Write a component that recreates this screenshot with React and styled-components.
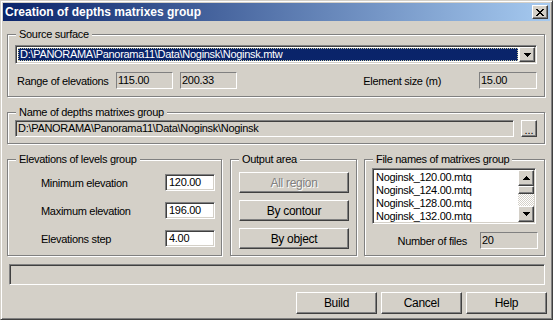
import React from "react";
import styled, { createGlobalStyle, css } from "styled-components";

const GlobalStyle = createGlobalStyle`
  html, body {
    margin: 0;
    padding: 0;
  }
  body {
    background: #d4d0c8;
    font-family: "Liberation Sans", Arial, sans-serif;
    font-size: 11px;
    letter-spacing: -0.3px;
    color: #000;
  }
`;

// win2000 bevels
const raised = css`
  border: 1px solid;
  border-color: #fff #404040 #404040 #fff;
  box-shadow: inset -1px -1px #808080, inset 1px 1px #d4d0c8;
`;

const sunken = css`
  border: 1px solid;
  border-color: #808080 #fff #fff #808080;
  box-shadow: inset 1px 1px #404040, inset -1px -1px #d4d0c8;
`;

const Window = styled.div`
  box-sizing: border-box;
  width: 553px;
  height: 320px;
  background: #d4d0c8;
  border: 1px solid;
  border-color: #d4d0c8 #404040 #404040 #d4d0c8;
  box-shadow: inset 1px 1px #fff, inset -1px -1px #808080;
  padding: 2px;
  display: flex;
  flex-direction: column;
`;

const TitleBar = styled.div`
  height: 18px;
  display: flex;
  align-items: center;
  justify-content: space-between;
  padding: 0 2px 0 2px;
  background: linear-gradient(to right, #0a246a, #a6caf0);
`;

const Title = styled.span`
  color: #fff;
  font-weight: bold;
  font-size: 12px;
  letter-spacing: 0;
`;

const CloseButton = styled.div`
  box-sizing: border-box;
  width: 16px;
  height: 14px;
  background: #d4d0c8;
  ${raised};
  display: flex;
  align-items: center;
  justify-content: center;
  padding-right: 1px;
`;

const Content = styled.div`
  flex: 1;
  display: flex;
  flex-direction: column;
  padding: 13px 5px 0 4px;
`;

const Group = styled.div`
  border: 1px solid #808080;
  box-shadow: inset 1px 1px #fff, 1px 1px #fff;
  margin-top: ${(p) => p.$gap || 0}px;
`;

const Caption = styled.div`
  width: fit-content;
  margin: -7px 0 0 8px;
  padding: 0 3px;
  line-height: 13px;
  background: #d4d0c8;
`;

const GroupBody = styled.div`
  padding: ${(p) => p.$pad};
  display: flex;
  flex-direction: column;
  gap: ${(p) => p.$gap || 0}px;
`;

const Combo = styled.div`
  box-sizing: border-box;
  height: 19px;
  background: #fff;
  ${sunken};
  padding: 1px;
  display: flex;
`;

const Selection = styled.div`
  flex: 1;
  margin: 1px 1px 1px 1px;
  background: #0a246a;
  color: #fff;
  outline: 1px dotted #c8c8a0;
  outline-offset: -1px;
  padding-left: 2px;
  line-height: 13px;
  white-space: nowrap;
  overflow: hidden;
`;

const ArrowButton = styled.div`
  box-sizing: border-box;
  width: ${(p) => p.$w || 16}px;
  height: ${(p) => p.$h ? `${p.$h}px` : "auto"};
  background: #d4d0c8;
  ${raised};
  display: flex;
  align-items: center;
  justify-content: center;
`;

const FieldRow = styled.div`
  display: flex;
  align-items: center;
  height: ${(p) => p.$h || 17}px;
  gap: ${(p) => p.$gap || 0}px;
  justify-content: ${(p) => p.$justify || "flex-start"};
`;

const Label = styled.span`
  white-space: nowrap;
  width: ${(p) => (p.$w ? `${p.$w}px` : "auto")};
  padding-left: ${(p) => p.$indent || 0}px;
  margin-right: ${(p) => p.$after || 0}px;
  box-sizing: border-box;
`;

const StaticBox = styled.div`
  box-sizing: border-box;
  width: ${(p) => p.$w}px;
  height: 17px;
  border: 1px solid;
  border-color: #808080 #fff #fff #808080;
  padding-left: 1px;
  line-height: 15px;
  margin-left: ${(p) => p.$ml || 0}px;
`;

const Spacer = styled.div`
  flex: 1;
`;

const PathField = styled.div`
  box-sizing: border-box;
  flex: 1;
  height: 17px;
  ${sunken};
  padding-left: 2px;
  line-height: 15px;
`;

const BrowseButton = styled.div`
  box-sizing: border-box;
  width: 16px;
  height: 17px;
  ${raised};
  display: flex;
  align-items: flex-end;
  justify-content: center;
  line-height: 12px;
  letter-spacing: 0;
`;

const Columns = styled.div`
  display: flex;
  margin-top: 15px;
  gap: 8px;
  align-items: stretch;
`;

const Column = styled(Group)`
  width: ${(p) => (p.$w ? `${p.$w}px` : "auto")};
  flex: ${(p) => (p.$w ? "none" : 1)};
  margin-left: ${(p) => p.$ml || 0}px;
`;

const Edit = styled.div`
  box-sizing: border-box;
  width: 50px;
  height: 17px;
  background: #fff;
  ${sunken};
  padding-left: 3px;
  line-height: 15px;
`;

const PushButton = styled.div`
  box-sizing: border-box;
  height: ${(p) => p.$h || 21}px;
  width: ${(p) => (p.$w ? `${p.$w}px` : "auto")};
  ${raised};
  display: flex;
  align-items: center;
  justify-content: center;
  font-size: 12px;
  color: ${(p) => (p.$disabled ? "#808080" : "#000")};
  text-shadow: ${(p) => (p.$disabled ? "1px 1px #fff" : "none")};
`;

const ListBox = styled.div`
  box-sizing: border-box;
  height: 56px;
  margin-right: 2px;
  background: #fff;
  ${sunken};
  padding: 1px;
  display: flex;
`;

const ListItems = styled.div`
  flex: 1;
  padding: 1px 0 0 2px;
  overflow: hidden;
`;

const ListItem = styled.div`
  height: 13px;
  line-height: 13px;
  white-space: nowrap;
`;

const ScrollBar = styled.div`
  width: 16px;
  display: flex;
  flex-direction: column;
`;

const ScrollTrack = styled.div`
  flex: 1;
  display: flex;
  flex-direction: column;
  background: repeating-conic-gradient(#fff 0 25%, #d4d0c8 0 50%) 0 0 / 2px 2px;
`;

const ScrollThumb = styled.div`
  box-sizing: border-box;
  height: 8px;
  background: #d4d0c8;
  ${raised};
`;

const StatusBar = styled.div`
  box-sizing: border-box;
  height: 21px;
  margin: 8px 0 0 2px;
  ${sunken};
`;

const ButtonBar = styled.div`
  display: flex;
  justify-content: flex-end;
  gap: 4px;
  margin: 7px -2px 0 0;
`;

const PixelIcon = ({ rows }) => {
  const d = rows
    .flatMap((r, y) => [...r].map((c, x) => (c === "x" ? `M${x} ${y}h1v1h-1z` : "")))
    .join("");
  return (
    <svg width={rows[0].length} height={rows.length} viewBox={`0 0 ${rows[0].length} ${rows.length}`}>
      <path d={d} fill="#000" shapeRendering="crispEdges" />
    </svg>
  );
};

const CROSS = ["xx....xx", ".xx..xx.", "..xxxx..", "...xx...", "..xxxx..", ".xx..xx.", "xx....xx"];
const DOWN = ["xxxxxxx", ".xxxxx.", "..xxx..", "...x..."];
const UP = [...DOWN].reverse();

const files = ["Noginsk_120.00.mtq", "Noginsk_124.00.mtq", "Noginsk_128.00.mtq", "Noginsk_132.00.mtq"];

const levels = [
  ["Minimum elevation", "120.00"],
  ["Maximum elevation", "196.00"],
  ["Elevations step", "4.00"],
];

export default function App() {
  return (
    <>
      <GlobalStyle />
      <Window>
        <TitleBar>
          <Title>Creation of depths matrixes group</Title>
          <CloseButton>
            <PixelIcon rows={CROSS} />
          </CloseButton>
        </TitleBar>
        <Content>
          <Group>
            <Caption>Source surface</Caption>
            <GroupBody $pad="4px 7px 7px 7px" $gap={8}>
              <Combo>
                <Selection>D:\PANORAMA\Panorama11\Data\Noginsk\Noginsk.mtw</Selection>
                <ArrowButton>
                  <PixelIcon rows={DOWN} />
                </ArrowButton>
              </Combo>
              <FieldRow>
                <Label $w={101} $indent={2}>Range of elevations</Label>
                <StaticBox $w={57}>115.00</StaticBox>
                <StaticBox $w={57} $ml={7}>200.33</StaticBox>
                <Spacer />
                <Label $after={38}>Element size (m)</Label>
                <StaticBox $w={58}>15.00</StaticBox>
              </FieldRow>
            </GroupBody>
          </Group>

          <Group $gap={15}>
            <Caption>Name of depths matrixes group</Caption>
            <GroupBody $pad="1px 7px 6px 7px">
              <FieldRow $gap={7}>
                <PathField>D:\PANORAMA\Panorama11\Data\Noginsk\Noginsk</PathField>
                <BrowseButton>...</BrowseButton>
              </FieldRow>
            </GroupBody>
          </Group>

          <Columns>
            <Column $w={213}>
              <Caption>Elevations of levels group</Caption>
              <GroupBody $pad="6px 6px 6px 33px" $gap={7}>
                {levels.map(([name, value]) => (
                  <FieldRow key={name} $h={21} $justify="space-between">
                    <Label>{name}</Label>
                    <Edit>{value}</Edit>
                  </FieldRow>
                ))}
              </GroupBody>
            </Column>
            <Column $w={125}>
              <Caption>Output area</Caption>
              <GroupBody $pad="6px 7px 6px 8px" $gap={7}>
                <PushButton $disabled>All region</PushButton>
                <PushButton>By contour</PushButton>
                <PushButton>By object</PushButton>
              </GroupBody>
            </Column>
            <Column $ml={-1}>
              <Caption>File names of matrixes group</Caption>
              <GroupBody $pad="2px 6px 6px 7px" $gap={8}>
                <ListBox>
                  <ListItems>
                    {files.map((f) => (
                      <ListItem key={f}>{f}</ListItem>
                    ))}
                  </ListItems>
                  <ScrollBar>
                    <ArrowButton $h={16}>
                      <PixelIcon rows={UP} />
                    </ArrowButton>
                    <ScrollTrack>
                      <ScrollThumb />
                    </ScrollTrack>
                    <ArrowButton $h={16}>
                      <PixelIcon rows={DOWN} />
                    </ArrowButton>
                  </ScrollBar>
                </ListBox>
                <FieldRow $justify="flex-end" $gap={13}>
                  <Label>Number of files</Label>
                  <StaticBox $w={58}>20</StaticBox>
                </FieldRow>
              </GroupBody>
            </Column>
          </Columns>

          <StatusBar />

          <ButtonBar>
            <PushButton $w={81} $h={22}>Build</PushButton>
            <PushButton $w={81} $h={22}>Cancel</PushButton>
            <PushButton $w={81} $h={22}>Help</PushButton>
          </ButtonBar>
        </Content>
      </Window>
    </>
  );
}
